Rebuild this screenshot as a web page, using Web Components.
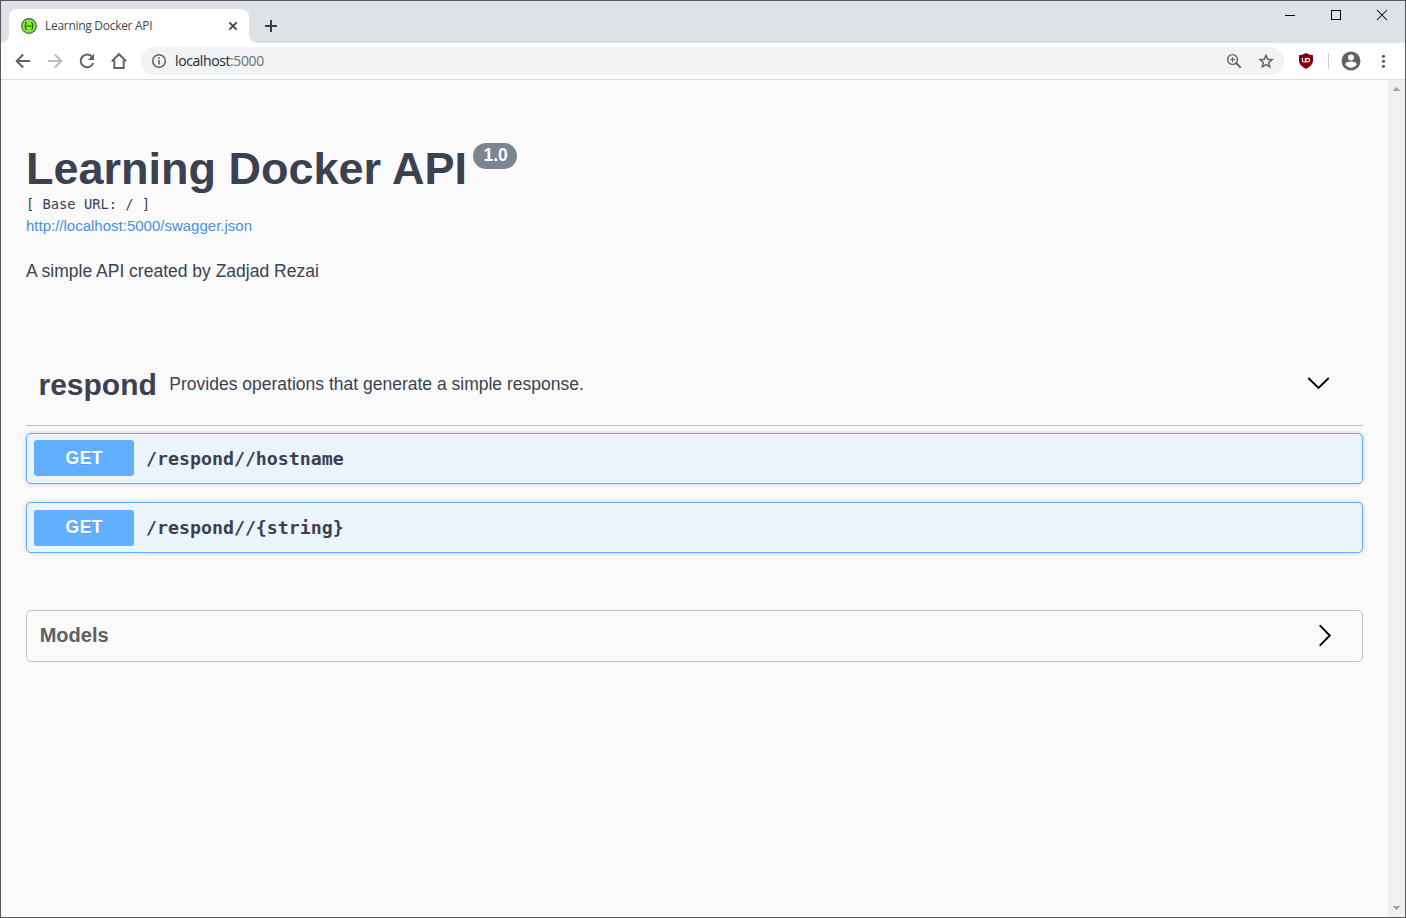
<!DOCTYPE html>
<html lang="en">
<head>
<meta charset="utf-8">
<title>Learning Docker API</title>
<style>
html,body{margin:0;height:100%;overflow:hidden}
body{font-family:"Liberation Sans",Arial,sans-serif;color:#3b4151}
</style>
</head>
<body>
<browser-window>
  <tab-strip slot="tabs">Learning Docker API</tab-strip>
  <tool-bar slot="toolbar">localhost<span slot="port">:5000</span></tool-bar>
  <api-info version="1.0" base="[ Base URL: / ]" url="http://localhost:5000/swagger.json">
    <span slot="title">Learning Docker API</span>
    A simple API created by Zadjad Rezai
  </api-info>
  <api-tag name="respond" description="Provides operations that generate a simple response.">
    <api-operation method="GET" style="--badge-line:37px">/respond//hostname</api-operation>
    <api-operation method="GET" style="--badge-top:7px">/respond//{string}</api-operation>
  </api-tag>
  <api-models>Models</api-models>
</browser-window>
<script>
function define(name, html) {
  customElements.define(name, class extends HTMLElement {
    constructor() {
      super();
      const t = document.createElement('template');
      t.innerHTML = '<style>*{box-sizing:border-box}svg{display:block;flex:none}</style>' + html;
      this.attachShadow({mode: 'open'}).append(t.content.cloneNode(true));
    }
    connectedCallback() {
      this.shadowRoot.querySelectorAll('[data-attr]').forEach(e => {
        e.textContent = this.getAttribute(e.dataset.attr);
      });
    }
  });
}

define('browser-window', `
<style>
:host{display:grid;grid-template-rows:42px 37px 1fr;box-sizing:border-box;width:1406px;height:918px;border:1px solid #5a585a;background:#fafafa}
.view{display:flex;min-height:0}
main{flex:1;padding:62px 25px 0}
</style>
<slot name="tabs"></slot><slot name="toolbar"></slot>
<div class="view"><main><slot></slot></main><scroll-bar></scroll-bar></div>`);

define('scroll-bar', `
<style>:host{display:flex;flex-direction:column;justify-content:space-between;width:17px;background:#f0f0f0;padding:7px 5px 7px 4px;box-sizing:border-box}</style>
<svg width="8" height="4" viewBox="0 0 8 4" shape-rendering="crispEdges"><path d="M0 4L4 0l4 4z" fill="#a3a3a3"/></svg>
<svg width="8" height="4" viewBox="0 0 8 4" shape-rendering="crispEdges"><path d="M0 0h8L4 4z" fill="#a3a3a3"/></svg>`);

define('tab-strip', `
<style>
:host{display:flex;background:#dee1e6;height:42px}
.tab{display:flex;align-items:center;width:240px;height:34px;margin:8px 0 0 8px;background:#fff;border-radius:8px 8px 0 0;padding:0 12px;position:relative}
.tab:before,.tab:after{content:"";position:absolute;bottom:0;width:8px;height:8px;background:radial-gradient(circle at 0 0,transparent 7.5px,#fff 8px)}
.tab:before{left:-8px}.tab:after{right:-8px;transform:scaleX(-1)}
.title{flex:1;margin-left:8px;font:12px/16px "Open Sans","Noto Sans",sans-serif;letter-spacing:-.29px;color:#45494e;white-space:nowrap}
.plus{margin:19px 0 0 16px}
.controls{display:flex;margin-left:auto;margin-right:17px;gap:34px;padding-top:8px}
</style>
<div class="tab">
<svg width="16" height="16" viewBox="0 0 16 16"><circle cx="8" cy="8" r="7.4" fill="#85ea2d" stroke="#37685a" stroke-width="1.1"/><path d="M6 4.500h-.4Q4.500 4.500 4.500 5.700v1Q4.500 8 3.400 8q1.100 0 1.100 1.300v1q0 1.200 1.100 1.200H6M10 4.500h.4q1.100 0 1.100 1.200v1q0 1.300 1.100 1.300-1.100 0-1.100 1.300v1q0 1.200-1.100 1.200H10" fill="none" stroke="#23563f" stroke-width="1.100"/><path d="M5.600 8h4.800" stroke="#23563f" stroke-width="1.300" stroke-dasharray="1.300 .45"/></svg>
<span class="title"><slot></slot></span>
<svg width="8" height="8" viewBox="0 0 8 8"><path d="M.3.3l7.4 7.4M7.7.3L.3 7.7" stroke="#3c4043" stroke-width="1.7"/></svg>
</div>
<svg class="plus" width="12" height="12" viewBox="0 0 12 12"><path d="M6 0v12M0 6h12" stroke="#3c4043" stroke-width="2"/></svg>
<div class="controls">
<svg width="12" height="12"><path d="M1 6.500h10" stroke="#000"/></svg>
<svg width="12" height="12"><rect x="1.500" y="1.500" width="9" height="9" fill="none" stroke="#000"/></svg>
<svg width="12" height="12"><path d="M1 1l10 10M11 1L1 11" stroke="#000" stroke-width="1.05"/></svg>
</div>`);

define('tool-bar', `
<style>
:host{display:flex;align-items:center;height:37px;background:#fff;border-bottom:1px solid #dadce0;box-sizing:border-box;padding:0 19px 0 13px}
.nav{display:flex;gap:14px}
.box{display:flex;align-items:center;flex:1;height:28px;border-radius:14px;background:#f1f3f4;margin:0 13px 0 13px;padding:0 9px;font:14px/20px "Open Sans","Noto Sans",sans-serif;letter-spacing:-.4px;color:#26282b}
.url{flex:1;margin-left:7px;white-space:nowrap}
.port{color:#6c7075}
.zoom{margin-right:14px}
.sep{width:1px;height:16px;background:#cfd1d3;margin:0 12px 0 13px}
.more{margin:0 -5px 0 14px}
</style>
<div class="nav">
<svg width="18" height="18" viewBox="0 0 18 18"><path d="M16 9H3M9.2 2.500L2.700 9l6.500 6.500" fill="none" stroke="#5f6368" stroke-width="2"/></svg>
<svg width="18" height="18" viewBox="0 0 18 18"><path d="M2 9h13M8.800 2.500L15.300 9l-6.500 6.500" fill="none" stroke="#babcbe" stroke-width="2"/></svg>
<svg width="18" height="18" viewBox="0 0 18 18"><path d="M14.200 5A6.400 6.400 0 1 0 15.200 11" fill="none" stroke="#5f6368" stroke-width="2"/><path d="M16 1.800V8H9.800z" fill="#5f6368"/></svg>
<svg width="18" height="18" viewBox="0 0 18 18"><path d="M1.800 9.300L9 2.200l7.200 7.100M4.300 8v8h9.400V8" fill="none" stroke="#5f6368" stroke-width="1.900"/></svg>
</div>
<div class="box">
<svg width="18" height="18" viewBox="0 0 18 18"><circle cx="9" cy="9" r="6.300" fill="none" stroke="#5f6368" stroke-width="1.500"/><path d="M9 8v4.500M9 5.300v1.600" stroke="#5f6368" stroke-width="1.600"/></svg>
<span class="url"><slot></slot><span class="port"><slot name="port"></slot></span></span>
<svg class="zoom" width="18" height="18" viewBox="0 0 18 18"><circle cx="7.500" cy="7.500" r="4.900" fill="none" stroke="#5f6368" stroke-width="1.400"/><path d="M11 11l4.700 4.700" stroke="#5f6368" stroke-width="1.900"/><path d="M7.500 5v5M5 7.500h5" stroke="#5f6368" stroke-width="1.200"/></svg>
<svg width="18" height="18" viewBox="0 0 18 18"><path d="M9 3.300l1.700 4 4.300.4-3.300 2.800 1 4.200L9 12.500l-3.700 2.200 1-4.200L3 7.700l4.300-.4z" fill="none" stroke="#5f6368" stroke-width="1.500"/></svg>
</div>
<svg width="18" height="18" viewBox="0 0 18 18"><path d="M9 1q3 2 7 2.200v5.300q0 5-7 8.500-7-3.500-7-8.500V3.200Q6 3 9 1z" fill="#800008"/><g fill="none" stroke="#fff" stroke-width="1.100"><path d="M5.400 6v2.600Q5.400 10 6.800 10h1.600V6"/><circle cx="10.700" cy="8.200" r="1.850"/></g></svg>
<span class="sep"></span>
<svg width="20" height="20" viewBox="0 0 20 20"><circle cx="10" cy="10" r="9.500" fill="#5f6368"/><circle cx="10" cy="6.600" r="3" fill="#fff"/><path d="M4.200 13.600q.4-3 5.800-3t5.800 3Q13.700 16.700 10 16.700t-5.800-3.100z" fill="#fff"/></svg>
<svg class="more" width="16" height="18" viewBox="0 0 16 18"><g fill="#5f6368"><circle cx="8.500" cy="4.300" r="1.600"/><circle cx="8.500" cy="9.300" r="1.600"/><circle cx="8.500" cy="14.300" r="1.600"/></g></svg>`);

define('api-info', `
<style>
:host{display:block;height:200px}
.head{display:flex;align-items:flex-start}
h2{margin:0;font-size:45px;line-height:53px;font-weight:700;white-space:nowrap}
.ver{display:block;margin:1px 0 0 6px;height:26px;padding:0 9.200px 0 10.500px;border-radius:13px;background:#7d8492;color:#fff;font-weight:700;font-size:17.500px;line-height:25px}
.base{margin:0;font:13.740px/18px "DejaVu Sans Mono",monospace;white-space:pre}
.url{display:block;margin-top:4px;font-size:15px;line-height:18px;color:#4990e2}
.desc{margin-top:25px;font-size:17.500px;line-height:22px}
</style>
<div class="head"><h2><slot name="title"></slot></h2><span class="ver" data-attr="version"></span></div>
<div class="base" data-attr="base"></div>
<a class="url" data-attr="url"></a>
<div class="desc"><slot></slot></div>`);

define('api-tag', `
<style>
:host{display:block}
header{display:flex;align-items:center;height:84px;border-bottom:1px solid #bfc0c3;padding:0 33px 0 12.500px;margin-bottom:7px}
h4{margin:2px 12.500px 0 0;font-size:30px;line-height:36px}
p{margin:0;flex:1;font-size:17.500px;line-height:20px}
.ops{display:flex;flex-direction:column;gap:18px}
</style>
<header><h4 data-attr="name"></h4><p data-attr="description"></p>
<svg width="23" height="13" viewBox="0 0 23 13"><path d="M1.800 1.500l9.700 9.500 9.700-9.500" fill="none" stroke="#000" stroke-width="1.900" stroke-linecap="round"/></svg></header>
<div class="ops"><slot></slot></div>`);

define('api-operation', `
<style>
:host{display:flex;align-items:flex-start;box-sizing:border-box;height:51px;border:1px solid #61affe;border-radius:5px;background:#ebf3fb;box-shadow:0 0 4px rgba(0,0,0,.19);padding-left:7px}
.method{width:100px;height:36px;margin-top:var(--badge-top,6px);border-radius:3px;background:#61affe;color:#fff;text-align:center;font-size:17.500px;font-weight:700;letter-spacing:.45px;line-height:var(--badge-line,35px);padding-left:.5px;text-shadow:0 1px 0 rgba(0,0,0,.1)}
.path{margin-left:12px;font:700 18.260px/49px "DejaVu Sans Mono",monospace}
</style>
<span class="method" data-attr="method"></span><span class="path"><slot></slot></span>`);

define('api-models', `
<style>
:host{display:flex;align-items:center;justify-content:space-between;box-sizing:border-box;height:52px;margin-top:57px;border:1px solid #bfc0c2;border-radius:5px;padding:0 30px 0 12.700px;font-size:20px;font-weight:700;color:#606060}
span{line-height:24px;margin-bottom:2px}
svg{margin-bottom:1px}
</style>
<span><slot></slot></span>
<svg width="13" height="23" viewBox="0 0 13 23"><path d="M1.300 1.800l9.500 9.700-9.500 9.700" fill="none" stroke="#000" stroke-width="1.900" stroke-linecap="round"/></svg>`);
</script>
</body>
</html>
